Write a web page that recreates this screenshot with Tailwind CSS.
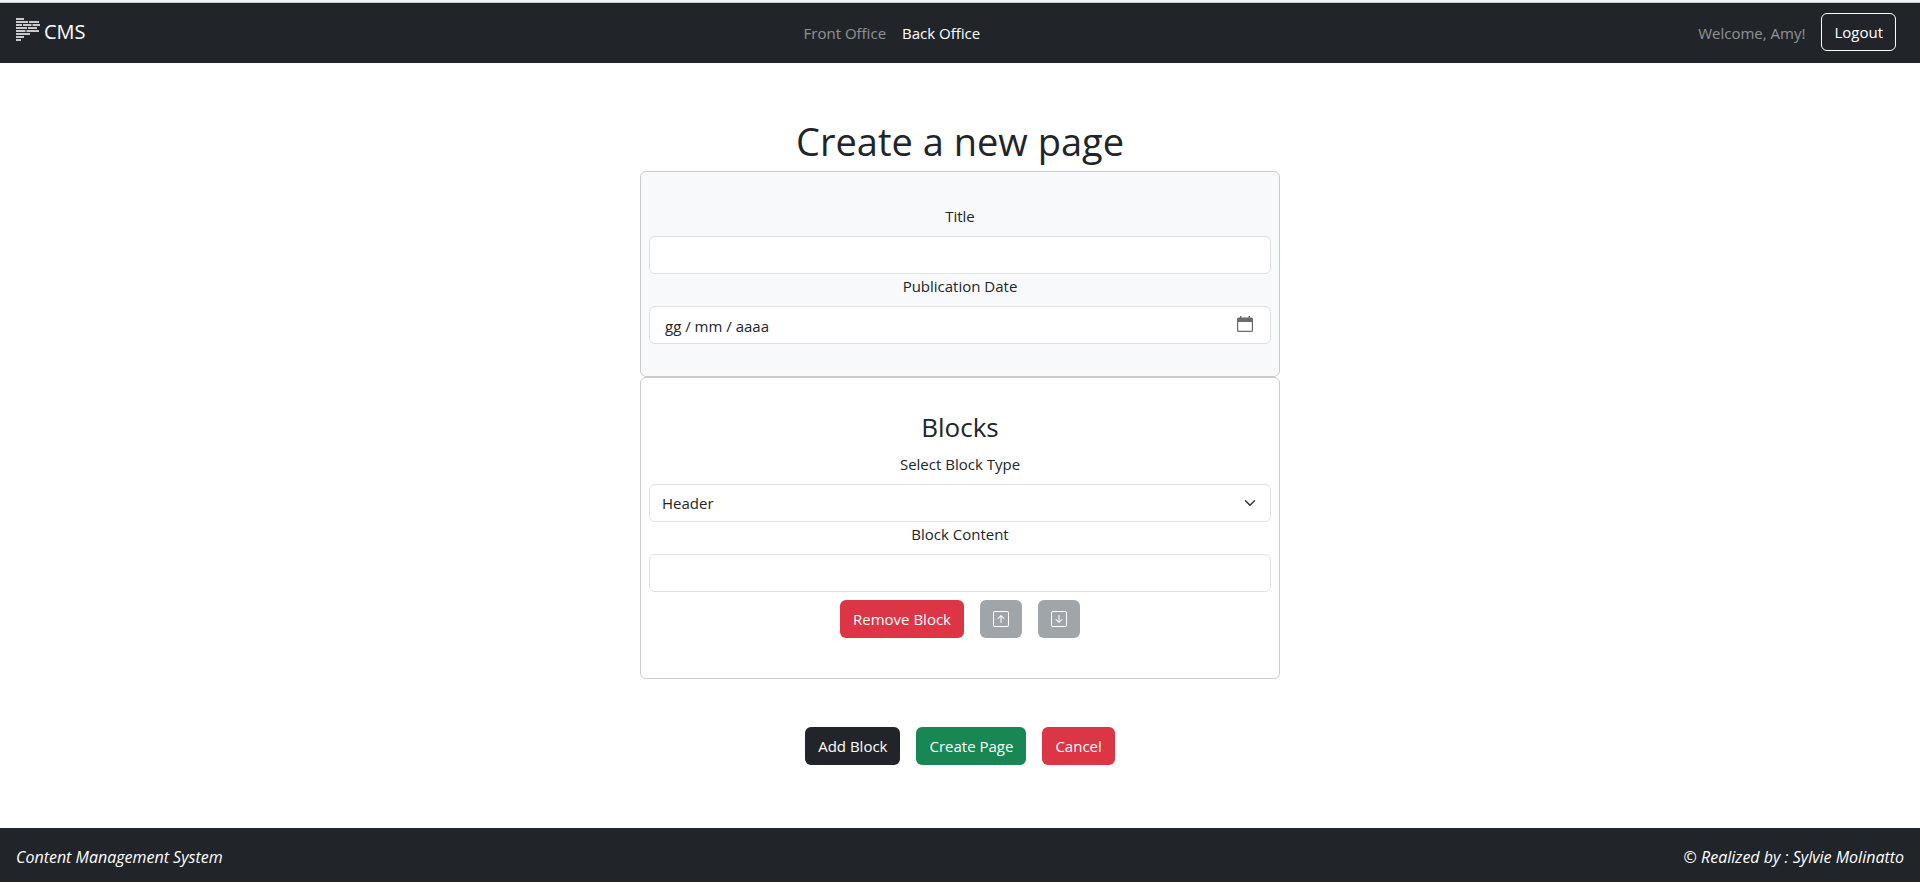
<!DOCTYPE html>
<html lang="en">
<head>
<meta charset="utf-8">
<meta name="viewport" content="width=device-width, initial-scale=1">
<title>CMS</title>
<script src="https://cdn.jsdelivr.net/npm/@tailwindcss/browser@4"></script>
</head>
<body class="flex min-h-screen flex-col border-t-2 border-[#f3f4f6] bg-white font-['Open_Sans','Noto_Sans',sans-serif] text-[15px] leading-6 text-[#212529]">
<header class="flex h-[61px] items-center justify-between border-t border-[#c8cacc] bg-[#212529] pr-6 pb-0.5 pl-4 text-white">
  <a href="#" class="flex items-center gap-1 text-xl leading-7">
    <svg class="mb-1 size-6" viewBox="0 0 24 24" fill="none" stroke="currentColor" stroke-width="1.7" aria-hidden="true">
      <path d="M0 1h8M0 4h12M13 4h10M0 7h6M7 7h8.500M16.500 7h7.500M0 10h11M12 10h9M0 13h9.500M10.500 13h12.500M0 16h14M0 19h8M0 22h5"/>
    </svg>
    CMS
  </a>
  <nav class="flex gap-4 pt-0.5">
    <a href="#" class="text-white/50">Front Office</a>
    <a href="#" class="text-white">Back Office</a>
  </nav>
  <div class="flex items-center gap-4">
    <span class="pt-0.5 text-white/50">Welcome, Amy!</span>
    <button type="button" class="h-[38px] rounded-md border border-white px-3">Logout</button>
  </div>
</header>

<main class="flex flex-1 flex-col items-center pt-[54px]">
  <h1 class="mb-1.5 text-[38px] leading-[48px]">Create a new page</h1>
  <form class="w-full max-w-[640px]">
    <section class="flex flex-col rounded-md border border-[#cccccc] bg-[#f8f9fa] px-2 py-8">
      <label for="title" class="mb-2 text-center">Title</label>
      <input id="title" type="text" class="h-[38px] w-full rounded-md border border-[#dee2e6] bg-white px-3">
      <label for="date" class="mb-2 text-center">Publication Date</label>
      <div class="flex h-[38px] items-center rounded-md border border-[#dee2e6] bg-white px-[15px]">
        <input id="date" type="text" value="gg / mm / aaaa" class="mt-0.5 min-w-0 flex-1 bg-transparent">
        <button type="button" aria-label="Open calendar" class="mr-0.5 mb-0.5">
          <svg class="size-4" viewBox="0 0 16 16" fill="#6c6c6c" aria-hidden="true"><path fill-rule="evenodd" d="M3 0h1.500v1.500h7V0H13v1.500h1.500A1.500 1.500 0 0 1 16 3v11.500A1.500 1.500 0 0 1 14.500 16h-13A1.500 1.500 0 0 1 0 14.500V3a1.500 1.500 0 0 1 1.500-1.500H3zM1.200 6v8.300q0 .5.500.5h12.600q.5 0 .5-.5V6z"/></svg>
        </button>
      </div>
    </section>
    <section class="flex flex-col rounded-md border border-[#cccccc] bg-white px-2 pt-8 pb-10">
      <h2 class="mb-2 text-center text-[26px] leading-[34px]">Blocks</h2>
      <label for="type" class="mb-2 text-center">Select Block Type</label>
      <div class="grid items-center">
        <select id="type" class="col-start-1 row-start-1 h-[38px] w-full appearance-none rounded-md border border-[#dee2e6] bg-white px-3"><option>Header</option></select>
        <svg class="pointer-events-none col-start-1 row-start-1 mr-[13px] h-3 w-4 justify-self-end" viewBox="0 0 16 16" fill="none" stroke="#343a40" stroke-width="2" stroke-linecap="round" stroke-linejoin="round" aria-hidden="true"><path d="m2 5 6 6 6-6"/></svg>
      </div>
      <label for="content" class="mb-2 text-center">Block Content</label>
      <input id="content" type="text" class="h-[38px] w-full rounded-md border border-[#dee2e6] bg-white px-3">
      <div class="mt-2 flex justify-center gap-4">
        <button type="button" class="h-[38px] rounded-md bg-[#dc3545] px-[13px] text-white">Remove Block</button>
        <button type="button" aria-label="Move block up" disabled class="flex h-[38px] w-[42px] items-center justify-center rounded-md bg-[#a0a5aa] text-white">
          <svg class="size-4" viewBox="0 0 16 16" fill="currentColor" aria-hidden="true"><path fill-rule="evenodd" d="M15 2a1 1 0 0 0-1-1H2a1 1 0 0 0-1 1v12a1 1 0 0 0 1 1h12a1 1 0 0 0 1-1zM0 2a2 2 0 0 1 2-2h12a2 2 0 0 1 2 2v12a2 2 0 0 1-2 2H2a2 2 0 0 1-2-2zm8.500 9.500a.5.5 0 0 1-1 0V5.707L5.354 7.854a.5.5 0 1 1-.708-.708l3-3a.5.5 0 0 1 .708 0l3 3a.5.5 0 0 1-.708.708L8.500 5.707z"/></svg>
        </button>
        <button type="button" aria-label="Move block down" disabled class="flex h-[38px] w-[42px] items-center justify-center rounded-md bg-[#a0a5aa] text-white">
          <svg class="size-4" viewBox="0 0 16 16" fill="currentColor" aria-hidden="true"><path fill-rule="evenodd" d="M15 2a1 1 0 0 0-1-1H2a1 1 0 0 0-1 1v12a1 1 0 0 0 1 1h12a1 1 0 0 0 1-1zM0 2a2 2 0 0 1 2-2h12a2 2 0 0 1 2 2v12a2 2 0 0 1-2 2H2a2 2 0 0 1-2-2zm8.500 2.500a.5.5 0 0 0-1 0v5.793L5.354 8.146a.5.5 0 1 0-.708.708l3 3a.5.5 0 0 0 .708 0l3-3a.5.5 0 0 0-.708-.708L8.500 10.293z"/></svg>
        </button>
      </div>
    </section>
    <div class="mt-12 flex justify-center gap-4 text-white">
      <button type="button" class="h-[38px] rounded-md bg-[#212529] px-[13px]">Add Block</button>
      <button type="submit" class="h-[38px] rounded-md bg-[#198754] px-[13px]">Create Page</button>
      <button type="button" class="h-[38px] rounded-md bg-[#dc3545] px-[13px]">Cancel</button>
    </div>
  </form>
</main>

<footer class="flex h-[54px] items-center justify-between bg-[#212529] px-4 pt-1 text-base text-white italic">
  <span>Content Management System</span>
  <span>© Realized by : Sylvie Molinatto</span>
</footer>
</body>
</html>
